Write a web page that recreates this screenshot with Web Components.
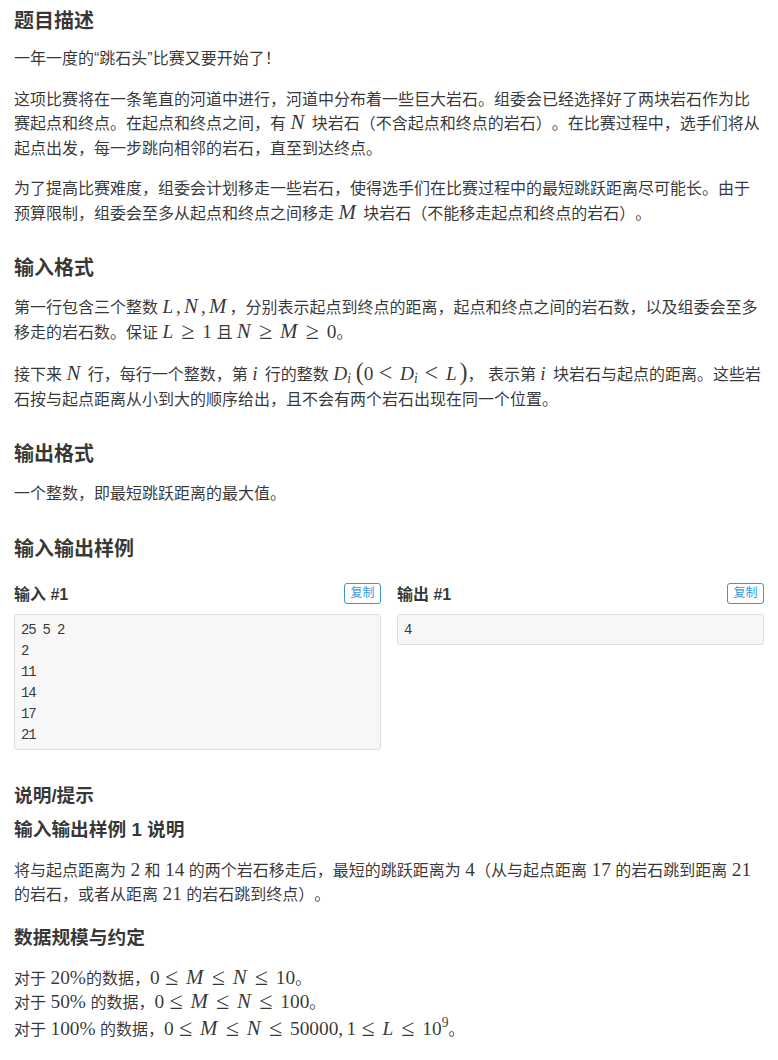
<!DOCTYPE html>
<html lang="zh-CN">
<head>
<meta charset="utf-8">
<title>题目描述</title>
<style>
html, body { margin: 0; background: #fff; }
body {
    color: rgba(0,0,0,0.8);
    font: 16px/24.5px "Liberation Sans", "Noto Sans CJK SC", sans-serif;
    text-spacing-trim: space-all;
}
</style>
</head>
<body>
<lg-problem>
    <lg-heading>题目描述</lg-heading>
    <lg-para>一年一度的“跳石头”比赛又要开始了！</lg-para>
    <lg-para>这项比赛将在一条笔直的河道中进行，河道中分布着一些巨大岩石。组委会已经选择好了两块岩石作为比赛起点和终点。在起点和终点之间，有 <lg-math><i class="w">N</i></lg-math> 块岩石（不含起点和终点的岩石）。在比赛过程中，选手们将从起点出发，每一步跳向相邻的岩石，直至到达终点。</lg-para>
    <lg-para>为了提高比赛难度，组委会计划移走一些岩石，使得选手们在比赛过程中的最短跳跃距离尽可能长。由于预算限制，组委会至多从起点和终点之间移走 <lg-math><i class="w">M</i></lg-math> 块岩石（不能移走起点和终点的岩石）。</lg-para>

    <lg-heading>输入格式</lg-heading>
    <lg-para>第一行包含三个整数 <lg-math><i>L</i>,<lg-gap></lg-gap><i class="w">N</i>,<lg-gap></lg-gap><i class="w">M</i></lg-math>，分别表示起点到终点的距离，起点和终点之间的岩石数，以及组委会至多移走的岩石数。保证 <lg-math><i>L</i><lg-rel>≥</lg-rel>1</lg-math> 且 <lg-math><i class="w">N</i><lg-rel>≥</lg-rel><i class="w">M</i><lg-rel>≥</lg-rel>0</lg-math>。</lg-para>
    <lg-para tall>接下来 <lg-math><i class="w">N</i></lg-math> 行，每行一个整数，第 <lg-math><i>i</i></lg-math> 行的整数 <lg-math><i>D</i><lg-script>i</lg-script><lg-gap></lg-gap><lg-delim>(</lg-delim>0<lg-rel>&lt;</lg-rel><i>D</i><lg-script>i</lg-script><lg-rel>&lt;</lg-rel><i>L</i><lg-delim>)</lg-delim></lg-math>， 表示第 <lg-math><i>i</i></lg-math> 块岩石与起点的距离。这些岩石按与起点距离从小到大的顺序给出，且不会有两个岩石出现在同一个位置。</lg-para>

    <lg-heading>输出格式</lg-heading>
    <lg-para>一个整数，即最短跳跃距离的最大值。</lg-para>

    <lg-heading>输入输出样例</lg-heading>
    <lg-samples>
        <lg-sample name="输入 #1">25 5 2
2
11
14
17
21</lg-sample>
        <lg-sample name="输出 #1">4</lg-sample>
    </lg-samples>

    <lg-heading level="small">说明/提示</lg-heading>
    <lg-heading level="sub">输入输出样例 1 说明</lg-heading>
    <lg-para>将与起点距离为 <lg-math>2</lg-math> 和 <lg-math>14</lg-math> 的两个岩石移走后，最短的跳跃距离为 <lg-math>4</lg-math>（从与起点距离 <lg-math>17</lg-math> 的岩石跳到距离 <lg-math>21</lg-math> 的岩石，或者从距离 <lg-math>21</lg-math> 的岩石跳到终点）。</lg-para>
    <lg-heading level="sub" class="last">数据规模与约定</lg-heading>
    <lg-para>对于 <lg-math>20%</lg-math>的数据，<lg-math>0<lg-rel>≤</lg-rel><i class="w">M</i><lg-rel>≤</lg-rel><i class="w">N</i><lg-rel>≤</lg-rel>10</lg-math>。<br>对于 <lg-math>50%</lg-math> 的数据，<lg-math>0<lg-rel>≤</lg-rel><i class="w">M</i><lg-rel>≤</lg-rel><i class="w">N</i><lg-rel>≤</lg-rel>100</lg-math>。<br>对于 <lg-math>100%</lg-math> 的数据，<lg-math>0<lg-rel>≤</lg-rel><i class="w">M</i><lg-rel>≤</lg-rel><i class="w">N</i><lg-rel>≤</lg-rel>50000,<lg-gap></lg-gap>1<lg-rel>≤</lg-rel><i>L</i><lg-rel>≤</lg-rel>10<lg-script sup>9</lg-script></lg-math>。</lg-para>
</lg-problem>

<script>
// small helper, most of these are only a :host rule and a slot
function simple(tag, css) {
    customElements.define(tag, class extends HTMLElement {
        constructor() {
            super();
            this.attachShadow({ mode: 'open' }).innerHTML = `<style>${css}</style><slot></slot>`;
        }
    });
}

simple('lg-problem', `:host { display: flex; flex-direction: column; padding: 8px 14px 0; }`);

simple('lg-heading', `
:host { display: block; font-size: 20px; line-height: 26px; font-weight: 700; margin: 13px 0 15px; }
:host(:first-child) { margin: 0 0 13px; }
:host([level="sub"]) { font-size: 18.72px; margin: 2px 0 16px; }
:host([level="sub"].last) { margin-top: 1px; }
:host([level="small"]) { font-size: 18.72px; line-height: 24px; margin: 34px 0 7px; }
`);

simple('lg-para', `
:host { display: block; margin: 0 0 16px; }
:host([tall]) { padding-top: 2px; }
`);

simple('lg-math', `
:host { font: 19.36px/1 "Liberation Serif", serif; }
::slotted(i) { letter-spacing: 0.14em; }
::slotted(i.w) { font-size: 1.08em; line-height: 0; }
`);
simple('lg-rel', `:host { font-size: 1.25em; line-height: 0; vertical-align: -1px; padding: 0 0.32em 0 0.22em; }`);
simple('lg-gap', `:host { padding-left: 0.17em; }`);
simple('lg-delim', `:host { font-size: 1.25em; line-height: 0; font-weight: 400; }`);
simple('lg-script', `
:host { font-size: 0.7em; font-style: italic; line-height: 0; vertical-align: -0.25em; margin-left: -0.2em; margin-right: 0.1em; }
:host([sup]) { font-style: normal; line-height: 1; vertical-align: 0.6em; margin: 0; }
`);

simple('lg-samples', `:host { display: grid; grid-template-columns: 1fr 1fr; gap: 16px; align-items: start; padding-top: 6px; }`);

const sampleTemplate = document.createElement('template');
sampleTemplate.innerHTML = `
<style>
:host { display: block; }
#head { display: flex; justify-content: space-between; align-items: flex-start; height: 31px; }
#name { font-weight: 700; font-size: 16px; line-height: 24px; }
#copy {
    box-sizing: border-box; width: 37px; height: 21px; border: 1px solid #3498db; border-radius: 3px;
    color: #3498db; font-size: 12px; line-height: 19px; text-align: center; background: #fff;
}
pre {
    margin: 0; padding: 5px 6px 3px; background: #f7f7f7; border: 1px solid #ddd; border-radius: 3px;
    font: 14px/21px "Liberation Mono", monospace; letter-spacing: -1.2px;
}
</style>
<div id="head"><span id="name"></span><span id="copy">复制</span></div>
<pre><slot></slot></pre>`;

class LgSample extends HTMLElement {
    constructor() {
        super();
        this.attachShadow({ mode: 'open' }).appendChild(sampleTemplate.content.cloneNode(true));
    }
    connectedCallback() {
        this.shadowRoot.querySelector('#name').textContent = this.getAttribute('name');
    }
}
customElements.define('lg-sample', LgSample);
</script>
</body>
</html>
